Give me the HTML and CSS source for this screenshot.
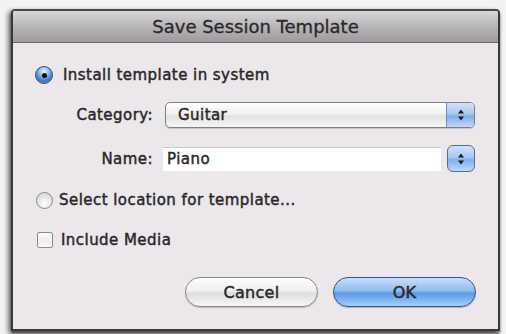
FILE: index.html
```html
<!DOCTYPE html>
<html>
<head>
<meta charset="utf-8">
<link rel="stylesheet" href="styles.css">
</head>
<body>
<div class="dialog">
  <div class="titlebar">Save Session Template</div>
  <div class="content">
    <div class="option first">
      <span class="radio on"><span class="dot"></span></span>
      <span class="opt-text">Install template in system</span>
    </div>
    <div class="form">
      <div class="label">Category:</div>
      <div class="popup">
        <span class="popup-text">Guitar</span>
        <span class="arrows"><svg width="10" height="14" viewBox="0 0 10 14"><path d="M5 1.5 L8 5.5 L2 5.5 Z M5 12.5 L8 8.5 L2 8.5 Z" fill="#1a1a1a"/></svg></span>
      </div>
      <div class="label">Name:</div>
      <div class="combo">
        <div class="field">Piano</div>
        <span class="stepper"><svg width="10" height="14" viewBox="0 0 10 14"><path d="M5 1.5 L8 5.5 L2 5.5 Z M5 12.5 L8 8.5 L2 8.5 Z" fill="#1a1a1a"/></svg></span>
      </div>
    </div>
    <div class="option second">
      <span class="radio off"></span>
      <span class="opt-text">Select location for template...</span>
    </div>
    <div class="option third">
      <span class="check"></span>
      <span class="opt-text">Include Media</span>
    </div>
    <div class="buttons">
      <button class="btn cancel">Cancel</button>
      <button class="btn ok">OK</button>
    </div>
  </div>
</div>
</body>
</html>
```
FILE: styles.css
```css
html, body {
  margin: 0;
  padding: 0;
}
body {
  width: 506px;
  height: 334px;
  background: #f4f3f4;
  font-family: "DejaVu Sans", "Liberation Sans", sans-serif;
  color: #262426;
  overflow: hidden;
  padding: 9px 0 0 11px;
  box-sizing: border-box;
}
.dialog {
  width: 489px;
  height: 322px;
  box-sizing: border-box;
  border: 2px solid #3a373a;
  border-top-color: #4a474a;
  border-radius: 4px 4px 0 0;
  background: #ebe7eb;
  box-shadow: -3px 2px 5px rgba(0,0,0,0.5), 0 3px 3px rgba(0,0,0,0.5);
  display: flex;
  flex-direction: column;
}
.titlebar {
  height: 31px;
  border-bottom: 1px solid #6c6a6c;
  background: linear-gradient(#d8d6d8, #b4b2b4 55%, #9d9b9d);
  border-radius: 2px 2px 0 0;
  text-align: center;
  font-size: 18px;
  line-height: 31px;
  color: #2a282a;
  -webkit-text-stroke: 0.3px #2a282a;
}
.content {
  flex: 1;
  padding: 22px 0 0 23px;
  display: flex;
  flex-direction: column;
  font-size: 15px;
  letter-spacing: 0.45px;
}
.option {
  display: flex;
  align-items: center;
  height: 20px;
}
.opt-text, .label, .popup-text, .field, .btn {
  color: #2a282a;
  -webkit-text-stroke: 0.45px #2a282a;
}
.radio {
  border-radius: 50%;
  box-sizing: border-box;
  display: inline-flex;
  align-items: center;
  justify-content: center;
  width: 17px;
  height: 17px;
}
.radio.on {
  border: 1px solid #34507e;
  background: radial-gradient(circle at 50% 28%, #eef5ff 0%, #9cc2f0 30%, #3a74cc 68%, #6aa2e6 100%);
  margin-right: 10px;
  width: 18px;
  height: 18px;
  margin-left: -1px;
}
.radio.on .dot {
  width: 5px;
  height: 5px;
  border-radius: 50%;
  background: #111;
}
.radio.off {
  border: 1px solid #8a888a;
  background: radial-gradient(circle at 50% 70%, #ffffff, #e4e2e4 60%, #cfcdcf);
  margin-right: 6px;
}
.check {
  width: 16px;
  height: 16px;
  box-sizing: border-box;
  border: 1px solid #8d8b8d;
  border-radius: 2px;
  background: linear-gradient(#ffffff, #eeeeee 60%, #f7f7f7);
  margin-right: 8px;
  margin-left: 1px;
}
.form {
  display: grid;
  grid-template-columns: 117px 1fr;
  column-gap: 12px;
  row-gap: 17px;
  margin-top: 17px;
  margin-right: 23px;
  align-items: center;
}
.label {
  text-align: right;
}
.popup {
  height: 26px;
  box-sizing: border-box;
  border: 1px solid #807e80;
  border-radius: 5px;
  background: linear-gradient(#ffffff, #f1f1f1 45%, #e2e2e2 55%, #f6f6f6);
  display: flex;
  align-items: stretch;
  overflow: hidden;
  box-shadow: 0 1px 1px rgba(0,0,0,0.15);
}
.popup-text {
  flex: 1;
  padding-left: 12px;
  line-height: 24px;
}
.arrows {
  width: 27px;
  border-left: 1px solid #7a8aa5;
  background: linear-gradient(#d2e4fa, #a5c8f2 45%, #7eb0ec 55%, #bcd9fa);
  display: flex;
  align-items: center;
  justify-content: center;
}
.combo {
  display: flex;
  align-items: center;
  gap: 6px;
  margin-left: -2px;
}
.field {
  flex: 1;
  height: 24px;
  box-sizing: border-box;
  background: #ffffff;
  border-top: 1px solid #c8c6c8;
  line-height: 23px;
  padding-left: 4px;
}
.stepper {
  width: 28px;
  height: 27px;
  box-sizing: border-box;
  border: 1px solid #5b6b88;
  border-radius: 6px;
  background: linear-gradient(#d2e4fa, #a5c8f2 45%, #7eb0ec 55%, #bcd9fa);
  display: flex;
  align-items: center;
  justify-content: center;
}
.second {
  margin-top: 18px;
}
.third {
  margin-top: 20px;
}
.buttons {
  display: flex;
  justify-content: flex-end;
  gap: 15px;
  margin-top: 27px;
  margin-right: 22px;
}
.btn {
  height: 30px;
  border-radius: 15px;
  font-family: inherit;
  font-size: 16px;
  letter-spacing: 0.3px;
  padding: 0;
  box-sizing: border-box;
}
.cancel {
  width: 133px;
  border: 1px solid #8a888a;
  background: linear-gradient(#fdfdfd, #f0f0f0 45%, #dedede 55%, #f7f7f7);
  box-shadow: 0 1px 1px rgba(0,0,0,0.2);
}
.ok {
  width: 143px;
  border: 1px solid #34548a;
  background: linear-gradient(#c8dffa, #8fbcf0 45%, #5b9ae6 55%, #a4cffb);
  box-shadow: 0 1px 1px rgba(0,0,0,0.25);
}
```
